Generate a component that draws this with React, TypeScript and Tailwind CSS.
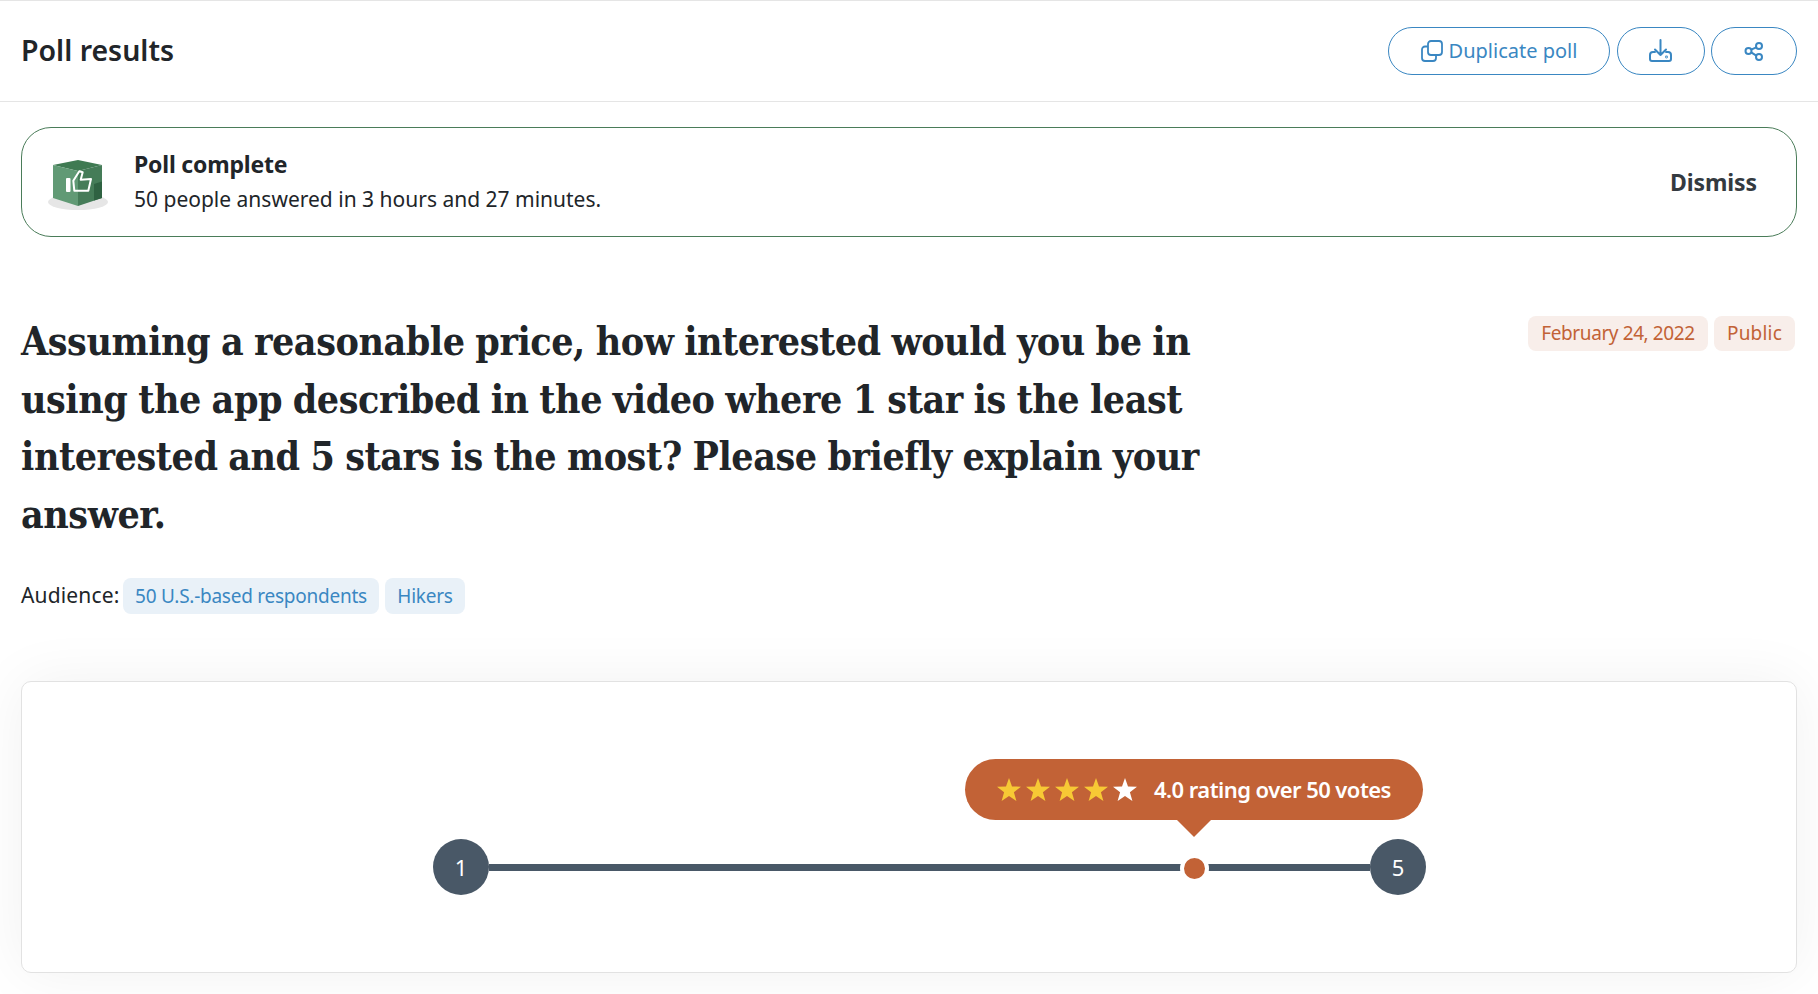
import React from 'react';

const Star: React.FC<{ className: string }> = ({ className }) => (
    <svg className={className} viewBox="0 0 24 23" width="24" height="23">
        <polygon points="12,0 15,8.4 24,8.7 16.9,14.2 19.4,23 12,17.9 4.6,23 7.1,14.2 0,8.7 9,8.4" fill="currentColor" />
    </svg>
);

const BoxIcon = () => (
    <svg className="mt-[6px]" width="64" height="56" viewBox="0 0 64 56">
        <ellipse cx="32" cy="45" rx="30" ry="8" fill="#e6e6e6" />
        <polygon points="32,3 56,8 32,14 7,8" fill="#3f7a52" />
        <polygon points="7,8 32,14 32,49 7,41" fill="#619a75" />
        <polygon points="32,14 56,8 56,41 32,49" fill="#457c58" />
        <polygon points="48,27 56,24.5 56,41 48,43.5" fill="#2f6242" />
        <rect x="20" y="21" width="4.5" height="14" rx="1" fill="#fff" />
        <path d="M28.3 33.7 L27.3 23.7 L33.3 14.3 L36.7 15.3 L34.7 22.7 L45 22 L42.3 33.7 Z" fill="none" stroke="#fff" strokeWidth="2" strokeLinejoin="round" />
    </svg>
);

const App: React.FC = () => {
    return (
        <div className="h-[994px] overflow-hidden bg-white font-['Noto_Sans',sans-serif] text-[#212529]">
            {/* Top bar */}
            <div className="h-[102px] px-[21px] flex items-center justify-between border-t border-b border-[#e5e5e5]">
                <h1 className="text-[28.5px] font-semibold -mt-[2px]">Poll results</h1>
                <div className="flex text-[#3a87c2]">
                    <button className="w-[222px] h-[48px] rounded-full border border-[#3a87c2] flex items-center justify-center gap-[6px] text-[20px]">
                        <svg width="22" height="22" viewBox="0 0 22 22" fill="none" stroke="currentColor" strokeWidth="1.8" strokeLinecap="round">
                            <rect x="7" y="1" width="14" height="14" rx="3" />
                            <path d="M6 6.5 H4 a3 3 0 0 0 -3 3 V18 a3 3 0 0 0 3 3 H12 a3 3 0 0 0 3-3 V16" />
                        </svg>
                        Duplicate poll
                    </button>
                    <button className="ml-[7px] w-[88px] h-[48px] rounded-full border border-[#3a87c2] flex items-center justify-center">
                        <svg width="24" height="24" viewBox="0 0 24 24" fill="none" stroke="currentColor" strokeWidth="2" strokeLinecap="round" strokeLinejoin="round">
                            <path d="M11.5 1 V16 M6 10.5 L11.5 16 L17 10.5" />
                            <path d="M6 13 H4 a3 3 0 0 0 -3 3 V20 a2 2 0 0 0 2 2 H20 a2 2 0 0 0 2-2 V16 a3 3 0 0 0 -3-3 H17" />
                            <circle cx="17.5" cy="18" r="0.4" />
                        </svg>
                    </button>
                    <button className="ml-[6px] w-[86px] h-[48px] rounded-full border border-[#3a87c2] flex items-center justify-center">
                        <svg width="22" height="22" viewBox="0 0 22 22" fill="none" stroke="currentColor" strokeWidth="2">
                            <circle cx="5.5" cy="11" r="3" />
                            <circle cx="16" cy="6" r="3" />
                            <circle cx="16" cy="17" r="3" />
                            <path d="M8.2 9.7 L13.3 7.3 M8.2 12.3 L13.3 15.7" />
                        </svg>
                    </button>
                </div>
            </div>

            <div className="px-[21px]">
                {/* Poll complete banner */}
                <div className="mt-[25px] h-[110px] rounded-[30px] border border-[#4a7c59] flex items-center justify-between pl-[24px] pr-[39px]">
                    <div className="flex items-center">
                        <BoxIcon />
                        <div className="ml-[24px]">
                            <p className="text-[23px] leading-[34px] font-bold tracking-[-0.2px] -translate-y-px">Poll complete</p>
                            <p className="text-[21px] leading-[34px]">50 people answered in 3 hours and 27 minutes.</p>
                        </div>
                    </div>
                    <button className="text-[23px] font-bold text-[#343a40] tracking-[-0.1px]">Dismiss</button>
                </div>

                {/* Question */}
                <div className="mt-[76px] flex items-start justify-between">
                    <h2 className="w-[1200px] text-[39px] leading-[57.6px] font-bold tracking-[-0.45px] [word-spacing:-1px] [font-stretch:condensed] font-['DejaVu_Serif_Condensed','DejaVu_Serif',serif]">
                        Assuming a reasonable price, how interested would you be in using the app described in the video where 1 star is the least interested and 5 stars is the most? Please briefly explain your answer.
                    </h2>
                    <div className="mt-[3px] mr-[2px] flex gap-[6px] text-[19px] tracking-[-0.4px] text-[#c26236]">
                        <span className="h-[35px] w-[180px] rounded-lg bg-[#f8eeea] flex items-center justify-center">February 24, 2022</span>
                        <span className="h-[35px] w-[81px] rounded-lg bg-[#f8eeea] flex items-center justify-center tracking-[0.2px]">Public</span>
                    </div>
                </div>

                {/* Audience */}
                <div className="mt-[35px] flex items-center text-[#3a87c2] text-[19px] tracking-[-0.25px]">
                    <span className="text-[#212529] text-[21px] tracking-[0.15px] w-[102px] -mt-[2px]">Audience:</span>
                    <span className="h-[36px] w-[256px] rounded-lg bg-[#e9f1f8] flex items-center justify-center">50 U.S.-based respondents</span>
                    <span className="ml-[6px] h-[36px] w-[80px] rounded-lg bg-[#e9f1f8] flex items-center justify-center">Hikers</span>
                </div>

                {/* Rating card */}
                <div className="mt-[67px] h-[292px] rounded-[10px] border border-[#e2e2e2] bg-white shadow-[0_0_60px_rgba(0,0,0,0.06)] pt-[157px] pl-[411px]">
                    <div className="w-[993px] flex items-center text-white text-[22px]">
                        <div className="w-[56px] h-[56px] rounded-full bg-[#495867] flex items-center justify-center shrink-0">1</div>
                        <div className="relative flex-1 h-[7px] bg-[#495867]">
                            <div className="absolute left-[695px] top-[-6px] w-[21px] h-[21px] rounded-full bg-[#c26236] box-content border-4 border-white -translate-x-[4px] -translate-y-[4px]" />
                            {/* Bubble */}
                            <div className="absolute left-[476px] -top-[105px] w-[458px] h-[61px] rounded-full bg-[#c26236] flex items-center pl-[32px]">
                                <div className="flex gap-[5px]">
                                    <Star className="text-[#f7c935]" />
                                    <Star className="text-[#f7c935]" />
                                    <Star className="text-[#f7c935]" />
                                    <Star className="text-[#f7c935]" />
                                    <Star className="text-white" />
                                </div>
                                <span className="ml-[17px] text-[22px] font-semibold tracking-[-0.55px]">4.0 rating over 50 votes</span>
                                <div className="absolute left-[212px] top-[61px] w-0 h-0 border-l-[17px] border-r-[17px] border-t-[17px] border-l-transparent border-r-transparent border-t-[#c26236]" />
                            </div>
                        </div>
                        <div className="w-[56px] h-[56px] rounded-full bg-[#495867] flex items-center justify-center shrink-0">5</div>
                    </div>
                </div>
            </div>
        </div>
    );
};

export default App;
